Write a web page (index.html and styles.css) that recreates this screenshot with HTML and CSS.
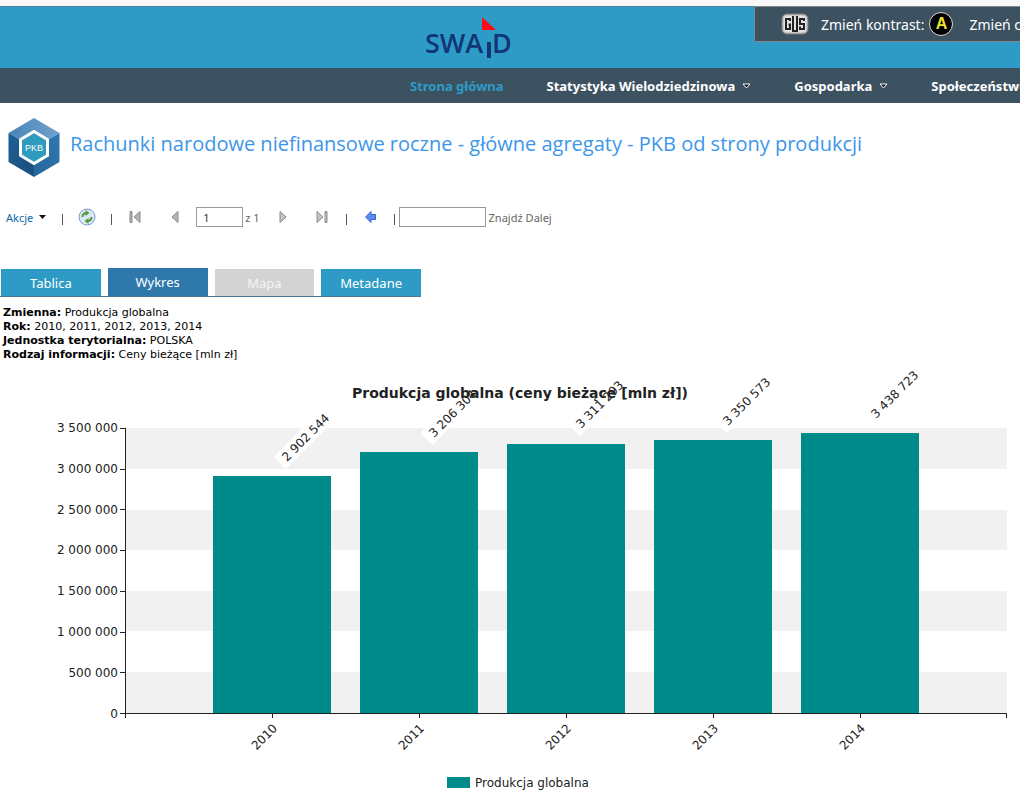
FILE: index.html
```html
<!DOCTYPE html>
<html lang="pl">
<head>
<meta charset="utf-8">
<title>SWAiD - Rachunki narodowe</title>
<link rel="stylesheet" href="styles.css">
</head>
<body>
<header class="banner">
  <a class="logo" href="#" aria-label="SWAiD">
    <svg width="90" height="50" viewBox="0 0 90 50">
      <path d="M60 7L74 20H60Z" fill="#fb0d13"/>
      <text class="logo-text" x="3" y="43">SWA</text>
      <path d="M65 32h4v16h-4z" fill="#113575"/>
      <text class="logo-text" x="70" y="43">D</text>
    </svg>
  </a>
  <div class="tools">
    <svg width="28" height="22" viewBox="0 0 28 22" aria-label="GUS">
      <rect x="1" y="1" width="26" height="20" rx="5" fill="#c9c9c9" stroke="#777"/>
      <rect x="3" y="3" width="22" height="16" rx="3" fill="#e2e2e2"/>
      <g fill="none" stroke="#222" stroke-width="2">
        <path d="M9 8V6H5V16H9V11.500H7.500"/>
        <path d="M12 3V18H16V3"/>
        <path d="M23 8V6H19V11H23V16H19V13.500"/>
      </g>
    </svg>
    <span class="tool-label">Zmień kontrast:</span>
    <button class="contrast" type="button">A</button>
    <span class="tool-next">Zmień czcionkę:</span>
  </div>
</header>
<nav class="menu">
  <a class="active" href="#">Strona główna</a>
  <a href="#">Statystyka Wielodziedzinowa <svg width="9" height="6" viewBox="0 0 9 6"><path d="M1 1H8L4.500 5Z"/></svg></a>
  <a href="#">Gospodarka <svg width="9" height="6" viewBox="0 0 9 6"><path d="M1 1H8L4.500 5Z"/></svg></a>
  <a href="#">Społeczeństwo</a>
</nav>
<main>
  <div class="heading">
    <svg width="52" height="60" viewBox="0 0 52 60" aria-hidden="true">
      <defs>
        <linearGradient id="top" x1="0" x2="1"><stop offset="0" stop-color="#4a85b8"/><stop offset="1" stop-color="#6fa2cd"/></linearGradient>
        <linearGradient id="left" x1="0" y1="0" x2="1" y2="1"><stop offset="0" stop-color="#1c5f95"/><stop offset="1" stop-color="#1a4f7b"/></linearGradient>
        <linearGradient id="right" x1="1" y1="0" x2="0" y2="1"><stop offset="0" stop-color="#3178ae"/><stop offset="1" stop-color="#24669c"/></linearGradient>
      </defs>
      <path d="M26 0L51.500 15 26 30 .5 15Z" fill="url(#top)"/>
      <path d="M.5 15L26 30V59L.5 44Z" fill="url(#left)"/>
      <path d="M51.500 15L26 30V59L51.500 44Z" fill="url(#right)"/>
      <path d="M26 13.500L39.500 21.500V37.500L26 45.500 12.500 37.500V21.500Z" fill="#309bbc" stroke="#fff" stroke-width="3"/>
      <text class="pkb" x="26" y="33" text-anchor="middle">PKB</text>
    </svg>
    <h1>Rachunki narodowe niefinansowe roczne - główne agregaty - PKB od strony produkcji</h1>
  </div>
  <div class="toolbar">
    <button class="actions" type="button">Akcje <svg width="7" height="4" viewBox="0 0 7 4"><path d="M0 0H7L3.500 4Z" fill="#111"/></svg></button>
    <span class="sep"></span>
    <button type="button" aria-label="Odśwież"><svg width="18" height="18" viewBox="0 0 18 18"><circle cx="9" cy="9" r="8" fill="#dce9f8" stroke="#7c9dd2"/><path d="M4.500 9Q4.500 5.500 8 5M13.500 9Q13.500 12.500 10 13" fill="none" stroke="#4f9b36" stroke-width="2"/><path d="M7.500 2L11.500 5 7.500 8ZM10.500 10L6.500 13 10.500 16Z" fill="#4f9b36"/></svg></button>
    <span class="sep"></span>
    <button type="button" aria-label="Pierwsza"><svg width="12" height="12" viewBox="0 0 12 12"><path d="M1 .5H3V11.500H1ZM11 .5V11.500L5 6Z" fill="#b5b5b5" stroke="#8b8b8b"/></svg></button>
    <button class="prev" type="button" aria-label="Poprzednia"><svg width="8" height="12" viewBox="0 0 8 12"><path d="M7 .5V11.500L1 6Z" fill="#b5b5b5" stroke="#8b8b8b"/></svg></button>
    <input class="page" aria-label="Strona" value="1">
    <span class="pages">z 1</span>
    <button class="next" type="button" aria-label="Następna"><svg width="8" height="12" viewBox="0 0 8 12"><path d="M1 .5V11.500L7 6Z" fill="#c5c5c5" stroke="#8b8b8b"/></svg></button>
    <button class="last" type="button" aria-label="Ostatnia"><svg width="12" height="12" viewBox="0 0 12 12"><path d="M9 .5H11V11.500H9ZM1 .5V11.500L7 6Z" fill="#c5c5c5" stroke="#8b8b8b"/></svg></button>
    <span class="sep"></span>
    <button class="back" type="button" aria-label="Wstecz"><svg width="12" height="12" viewBox="0 0 12 12"><path d="M.5 6L6 .5V3.500H10.500V8.500H6V11.500Z" fill="#5a8cf0" stroke="#3764ca"/></svg></button>
    <span class="sep end"></span>
    <input class="find" aria-label="Znajdź tekst">
    <button class="find-action" type="button">Znajdź</button>
    <button class="find-action" type="button">Dalej</button>
  </div>
  <div class="tabs">
    <button type="button">Tablica</button>
    <button class="selected" type="button">Wykres</button>
    <button type="button" disabled>Mapa</button>
    <button type="button">Metadane</button>
  </div>
  <div class="details">
    <div><b>Zmienna:</b> Produkcja globalna</div>
    <div><b>Rok:</b> 2010, 2011, 2012, 2013, 2014</div>
    <div><b>Jednostka terytorialna:</b> POLSKA</div>
    <div><b>Rodzaj informacji:</b> Ceny bieżące [mln zł]</div>
  </div>
  <svg class="chart" viewBox="0 0 1020 434">
    <g fill="#f1f1f1">
      <path d="M125 66H1007V107H125ZM125 148H1007V188H125ZM125 229H1007V269H125ZM125 310H1007V351H125Z"/>
    </g>
    <g fill="#008b8b">
      <path d="M213 114H331V351H213ZM360 90H478V351H360ZM507 82H625V351H507ZM654 78H772V351H654ZM801 71H919V351H801Z"/>
    </g>
    <path class="axis" d="M125.500 66V356M120 351.500H1007M1006.500 351V356M120 66.500H125M120 107.500H125M120 147.500H125M120 188.500H125M120 229.500H125M120 270.500H125M120 310.500H125M272.500 351V356M419.500 351V356M566.500 351V356M713.500 351V356M860.500 351V356"/>
    <g text-anchor="end">
      <text x="118" y="70">3 500 000</text>
      <text x="118" y="111">3 000 000</text>
      <text x="118" y="152">2 500 000</text>
      <text x="118" y="192">2 000 000</text>
      <text x="118" y="233">1 500 000</text>
      <text x="118" y="274">1 000 000</text>
      <text x="118" y="315">500 000</text>
      <text x="118" y="356">0</text>
      <text transform="translate(278 367) rotate(-45)">2010</text>
      <text transform="translate(425 367) rotate(-45)">2011</text>
      <text transform="translate(572 367) rotate(-45)">2012</text>
      <text transform="translate(719 367) rotate(-45)">2013</text>
      <text transform="translate(866 367) rotate(-45)">2014</text>
    </g>
    <g>
      <g transform="translate(287 100) rotate(-45)"><path d="M-6 -13H64V4H-6Z" fill="#fff"/><text>2 902 544</text></g>
      <g transform="translate(434 76) rotate(-45)"><path d="M-6 -13H64V4H-6Z" fill="#fff"/><text>3 206 304</text></g>
      <g transform="translate(581 67) rotate(-45)"><path d="M-6 -13H64V4H-6Z" fill="#fff"/><text>3 311 293</text></g>
      <g transform="translate(728 64) rotate(-45)"><path d="M-6 -13H64V4H-6Z" fill="#fff"/><text>3 350 573</text></g>
      <g transform="translate(876 57) rotate(-45)"><text>3 438 723</text></g>
    </g>
    <text class="chart-title" x="520" y="36" text-anchor="middle">Produkcja globalna (ceny bieżące [mln zł])</text>
    <rect x="447" y="415" width="23" height="11" fill="#008b8b"/>
    <text x="475" y="425">Produkcja globalna</text>
  </svg>
</main>
</body>
</html>
```
FILE: styles.css
```css
* { box-sizing: border-box; }
body {
  margin: 0;
  background: #fff;
  color: #000;
  font-family: "Noto Sans", sans-serif;
  overflow-x: hidden;
}
button {
  border: 0;
  padding: 0;
  background: none;
  font: inherit;
  color: inherit;
}
svg { display: block; flex: none; }
.banner {
  display: flex;
  align-items: flex-start;
  height: 68px;
  border-top: 6px solid #f7f7f7;
  background: #2e9bc6;
  box-shadow: inset 0 1px #50809a;
}
.logo { margin: 4px auto 0 422px; }
.logo-text { font: 600 27px "Open Sans", sans-serif; fill: #113575; }
.tools {
  display: flex;
  align-items: center;
  flex: 0 0 266px;
  height: 36px;
  padding-left: 26px;
  border: 1px solid #84898b;
  border-right: 0;
  background: #3d5261;
  color: #fff;
  font-size: 14px;
  white-space: nowrap;
  overflow: hidden;
}
.tool-label { margin: 0 5px 0 12px; }
.contrast {
  flex: none;
  width: 24px;
  height: 24px;
  border: 1px solid #ddd;
  border-radius: 50%;
  background: #000;
  color: #eee32a;
  font: bold 16px/20px "Liberation Sans", sans-serif;
}
.tool-next { margin-left: 16px; }
.menu {
  display: flex;
  gap: 43px;
  height: 35px;
  padding-left: 410px;
  background: #3d5261;
  font-size: 13px;
  font-weight: 700;
  line-height: 36px;
  white-space: nowrap;
  overflow: hidden;
}
.menu a {
  display: flex;
  align-items: center;
  gap: 7px;
  color: #fff;
  text-decoration: none;
}
.menu .active { color: #2e9bc6; }
.menu path { fill: #111; stroke: #fff; }
.heading {
  display: flex;
  gap: 10px;
  padding: 15px 8px 0;
}
.heading h1 {
  margin: 10px 0 0;
  color: #3c96ea;
  font: 400 20px/32px "Open Sans", sans-serif;
}
.pkb { font: 9px "Liberation Sans", sans-serif; fill: #fff; }
.toolbar {
  display: flex;
  align-items: center;
  height: 22px;
  margin-top: 28px;
  padding-left: 6px;
  color: #666;
  font-size: 11px;
  white-space: nowrap;
}
.toolbar .actions {
  display: flex;
  align-items: center;
  gap: 6px;
  color: #0b68ab;
}
.sep { flex: none; width: 1px; height: 11px; margin: 4px 15px 0; background: #555; }
.actions + .sep { margin-left: 16px; }
.prev { margin: 0 17px 0 30px; }
.sep + button[aria-label="Pierwsza"] { margin-left: 2px; }
.toolbar input {
  height: 20px;
  border: 1px solid #999;
  padding: 0 6px;
  background: #fff;
  color: #333;
  font: inherit;
}
.toolbar .page { width: 47px; }
.pages { margin-left: 2px; }
.next { margin: 0 29px 0 19px; }
.last { margin-right: 3px; }
.back { margin: 0 2px 0 3px; }
.sep.end { margin-right: 4px; }
.toolbar .find { width: 87px; }
.find-action { margin-left: 3px; }
.tabs {
  display: flex;
  align-items: flex-end;
  gap: 7px;
  width: 421px;
  height: 30px;
  margin-top: 39px;
  padding-left: 1px;
  border-bottom: 1px solid #4d7796;
}
.tabs button {
  flex: 1;
  height: 27px;
  background: #2e9bc6;
  color: #fff;
  font-size: 13px;
}
.tabs .selected { height: 28px; background: #2f78ac; }
.tabs button:disabled { background: #d3d3d3; color: #f4f4f4; }
.details {
  padding: 9px 3px 0;
  font: 11px/14px "DejaVu Sans", sans-serif;
}
.chart { width: 100%; font: 12px "DejaVu Sans", sans-serif; fill: #222; }
.chart-title { font-size: 14px; font-weight: 700; }
.axis { fill: none; stroke: #222; }
```
